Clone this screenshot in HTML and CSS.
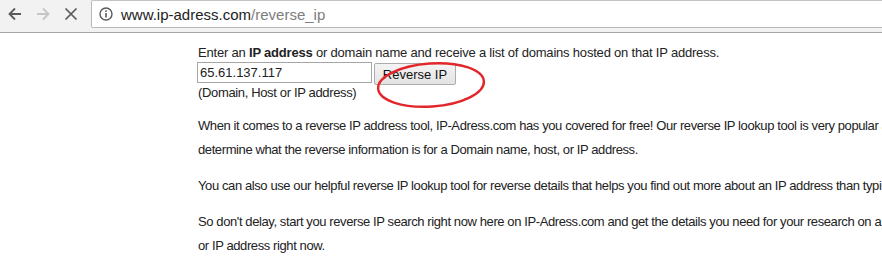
FILE: index.html
```html
<!DOCTYPE html>
<html lang="en">
<head>
    <meta charset="UTF-8">
    <title>Reverse IP Lookup - IP-Adress.com</title>
    <link rel="stylesheet" href="styles.css">
</head>
<body>
    <div class="toolbar">
        <span class="nav-button">
            <svg width="16" height="16" viewBox="0 0 16 16"><path d="M14 8H2.5M8 2.5L2.5 8L8 13.5" fill="none" stroke="#5a5a5a" stroke-width="1.8"/></svg>
        </span>
        <span class="nav-button">
            <svg width="16" height="16" viewBox="0 0 16 16"><path d="M2 8h11.5M8 2.5L13.5 8L8 13.5" fill="none" stroke="#c6c6c6" stroke-width="1.8"/></svg>
        </span>
        <span class="nav-button">
            <svg width="16" height="16" viewBox="0 0 16 16"><path d="M2.5 2.5l11 11M13.5 2.5l-11 11" fill="none" stroke="#5a5a5a" stroke-width="1.7"/></svg>
        </span>
        <div class="omnibox">
            <svg class="info-icon" width="14" height="14" viewBox="0 0 14 14">
                <circle cx="7" cy="7" r="6" fill="none" stroke="#5a5a5a" stroke-width="1.4"/>
                <rect x="6.2" y="6" width="1.6" height="4.5" fill="#5a5a5a"/>
                <rect x="6.2" y="3.3" width="1.6" height="1.6" fill="#5a5a5a"/>
            </svg>
            <span class="url-host">www.ip-adress.com</span><span class="url-path">/reverse_ip</span>
        </div>
    </div>

    <div class="content">
        <p class="intro">Enter an <b>IP address</b> or domain name and receive a list of domains hosted on that IP address.</p>

        <form class="lookup" onsubmit="return false">
            <input type="text" class="lookup-input" value="65.61.137.117">
            <button type="submit" class="lookup-button">Reverse IP</button>
            <svg class="scribble" width="120" height="54" viewBox="0 0 120 54">
                <ellipse cx="57" cy="27" rx="53" ry="21.5" transform="rotate(-4 57 27)" fill="none" stroke="#e3262c" stroke-width="2.4"/>
            </svg>
        </form>
        <div class="hint">(Domain, Host or IP address)</div>

        <p class="text first">When it comes to a reverse IP address tool, IP-Adress.com has you covered for free! Our reverse IP lookup tool is very popular and easy to use, allowing you to quickly<br>determine what the reverse information is for a Domain name, host, or IP address.</p>

        <p class="text">You can also use our helpful reverse IP lookup tool for reverse details that helps you find out more about an IP address than typical lookup tools.</p>

        <p class="text">So don't delay, start you reverse IP search right now here on IP-Adress.com and get the details you need for your research on a Domain name, host,<br>or IP address right now.</p>
    </div>
</body>
</html>
```

FILE: styles.css
```css
* {
    box-sizing: border-box;
}

html, body {
    overflow: hidden;
}

body {
    margin: 0;
    font-family: "Liberation Sans", Arial, sans-serif;
    font-size: 13px;
    color: #222;
    background-color: white;
}

.toolbar {
    display: flex;
    align-items: flex-start;
    height: 33px;
    padding-left: 1px;
    background-color: #f2f2f2;
    border-bottom: 1px solid #a4a4a4;
}

.nav-button {
    display: flex;
    justify-content: center;
    align-items: center;
    width: 28px;
    height: 28px;
}

.omnibox {
    display: flex;
    align-items: center;
    flex: 1;
    height: 28px;
    margin-left: 6px;
    margin-right: -10px;
    padding-left: 7px;
    background-color: white;
    border: 1px solid #b9b9b9;
    border-top-color: #c4c4c4;
    border-radius: 2px;
    font-size: 15px;
}

.info-icon {
    margin-right: 8px;
}

.url-host {
    color: #222;
}

.url-path {
    color: #7d7d7d;
}

.content {
    padding: 12px 0 0 198px;
    white-space: nowrap;
    letter-spacing: -0.2px;
}

.intro {
    margin: 0;
    line-height: 15px;
}

.lookup {
    position: relative;
    display: flex;
    align-items: flex-start;
    margin: 2px 0 0 -1px;
}

.lookup-input {
    width: 175px;
    height: 21px;
    padding: 1px 2px;
    border: 1px solid #a6a6a6;
    font-family: inherit;
    font-size: 13px;
    color: #222;
    outline: none;
}

.lookup-button {
    width: 82px;
    height: 22px;
    margin: 1px 0 0 2px;
    padding: 0;
    border: 1px solid #acacac;
    border-radius: 2px;
    background: linear-gradient(#f4f4f4, #e3e3e3);
    font-family: inherit;
    font-size: 13px;
    color: #111;
}

.scribble {
    position: absolute;
    left: 177px;
    top: -4px;
    pointer-events: none;
}

.hint {
    line-height: 15px;
    letter-spacing: -0.35px;
}

.text {
    margin: 12px 0 0;
    line-height: 24px;
    letter-spacing: -0.4px;
}

.text.first {
    margin-top: 14px;
}
```
